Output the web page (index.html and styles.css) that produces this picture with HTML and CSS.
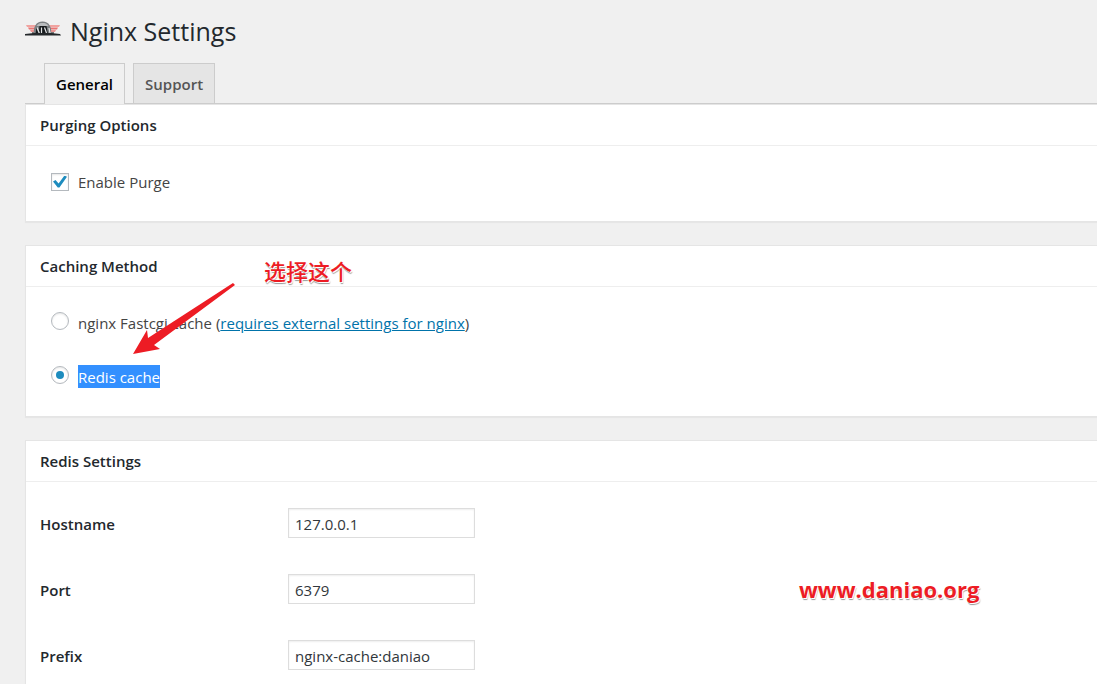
FILE: index.html
```html
<!DOCTYPE html>
<html lang="en">
<head>
<meta charset="utf-8">
<title>Nginx Settings</title>
<meta name="viewport" content="width=device-width, initial-scale=1">
<link rel="stylesheet" href="styles.css">
</head>
<body>
<main class="page">
  <header class="page-header">
    <svg class="logo" viewBox="0 0 36 16" aria-hidden="true">
      <path d="M1 4h13v2H2zM22 4h13l-1 2H22z" fill="#f0a3a0"/>
      <path d="M3 6.500h10v2H4zM23 6.500h10l-1 2h-9z" fill="#ea7573"/>
      <path d="M5 9h8v2H6zM23 9h8l-1 2h-7z" fill="#ec9492"/>
      <path d="M7 11h22v2H7z" fill="#777"/>
      <path d="M9 13C8 6 11 .500 17.500 .500S27 6 26 13z" fill="#7c8083"/>
      <path d="M11.500 5C13 2.500 15 2 17.500 2s4.500 .500 6 3z" fill="#b9bcbe"/>
      <path d="M10.500 13l1-7 2 7zM13.500 13l1-8h7l1.500 8z" fill="#171b1e"/>
      <path d="M12 6.500l2.500 6M16.500 6.500v5.500M19.500 6.500l2 5.500M24 7l1 5" fill="none" stroke="#e4e6e7" stroke-width="1.200"/>
      <path d="M0 13l9-1h17l9 1 1 1.500H0z" fill="#24282b"/>
    </svg>
    <h1 class="page-title">Nginx Settings</h1>
  </header>

  <nav class="tabs" aria-label="Settings sections">
    <a class="tab tab-active" href="#general" aria-current="page">General</a>
    <a class="tab" href="#support">Support</a>
  </nav>

  <form class="panels" id="general">
    <section class="panel">
      <h2 class="panel-title">Purging Options</h2>
      <div class="options">
        <label class="option"><input class="check" type="checkbox" checked><span>Enable Purge</span></label>
      </div>
    </section>

    <section class="panel">
      <h2 class="panel-title">Caching Method</h2>
      <div class="options">
        <div class="option">
          <input class="radio" type="radio" name="method" id="fastcgi">
          <span><label for="fastcgi">nginx Fastcgi cache</label> (<a class="link" href="#external">requires external settings for nginx</a>)</span>
        </div>
        <div class="option">
          <input class="radio" type="radio" name="method" id="redis" checked>
          <label class="selected" for="redis">Redis cache</label>
        </div>
      </div>
      <svg class="arrow" viewBox="0 0 104 73" aria-hidden="true">
        <path d="M1 71L15 47l1 8L101 0l2 2L22 62l6 4z" fill="#ed1c24"/>
      </svg>
      <span class="note" lang="zh">选择这个</span>
    </section>

    <section class="panel panel-last">
      <h2 class="panel-title">Redis Settings</h2>
      <div class="fields">
        <label class="field-label" for="hostname">Hostname</label>
        <input class="field" id="hostname" type="text" value="127.0.0.1">
        <label class="field-label" for="port">Port</label>
        <input class="field" id="port" type="text" value="6379">
        <label class="field-label" for="prefix">Prefix</label>
        <input class="field" id="prefix" type="text" value="nginx-cache:daniao">
      </div>
      <span class="watermark">www.daniao.org</span>
    </section>
  </form>
</main>
</body>
</html>
```
FILE: styles.css
```css
* {
  box-sizing: border-box;
}

body {
  margin: 0;
  background: #f0f0f0;
  color: #444;
  font: 15px/22px "Open Sans", "Noto Sans", "Noto Sans CJK SC", sans-serif;
}

.page {
  display: flex;
  flex-direction: column;
  min-height: 100vh;
  padding: 15px 0 0 25px;
}

.page-header {
  display: flex;
  align-items: center;
  gap: 9px;
  height: 32px;
}

.logo {
  width: 36px;
  height: 16px;
  margin-bottom: 4px;
}

.page-title {
  margin: 0;
  color: #23282d;
  font-size: 25px;
  font-weight: 400;
  line-height: 32px;
}

.tabs {
  display: flex;
  gap: 8px;
  margin-top: 16px;
  padding-left: 19px;
  border-bottom: 1px solid #ccc;
}

.tab {
  padding: 9px 11px 8px;
  border: 1px solid #ccc;
  border-bottom: 0;
  background: #e5e5e5;
  color: #555;
  font-size: 15px;
  font-weight: 600;
  text-decoration: none;
}

.tab-active {
  margin-bottom: -1px;
  padding-bottom: 9px;
  background: #f0f0f0;
  color: #000;
}

.panels {
  display: flex;
  flex: 1;
  flex-direction: column;
  gap: 23px;
}

.panel {
  position: relative;
  border: 1px solid #e5e5e5;
  border-right: 0;
  background: #fff;
  box-shadow: 0 1px 1px rgba(0, 0, 0, 0.04);
}

.panel-last {
  flex: 1;
  border-bottom: 0;
}

.panel-title {
  margin: 0;
  padding: 9px 14px;
  border-bottom: 1px solid #eee;
  color: #23282d;
  font-size: 15px;
  font-weight: 600;
  line-height: 22px;
}

.options {
  padding: 9px 25px 12px;
}

.option {
  display: flex;
  align-items: center;
  gap: 9px;
  min-height: 54px;
}

.check,
.radio {
  display: grid;
  place-content: center;
  width: 18px;
  height: 18px;
  margin: 0 0 1px;
  border: 1px solid #b4b9be;
  background: #fff;
  box-shadow: inset 0 1px 2px rgba(0, 0, 0, 0.1);
  appearance: none;
}

.radio {
  margin-bottom: 4px;
  border-radius: 50%;
}

.check:checked::before {
  width: 14px;
  height: 12px;
  background: #1e8cbe;
  clip-path: polygon(0 50%, 18% 38%, 40% 66%, 82% 0, 100% 10%, 46% 100%, 34% 100%);
  content: "";
}

.radio:checked::before {
  width: 8px;
  height: 8px;
  border-radius: 50%;
  background: #1e8cbe;
  content: "";
}

.link {
  color: #0073aa;
}

.selected {
  margin-top: -1px;
  padding-top: 1px;
  background: #3390ff;
  color: #fff;
}

.fields {
  display: grid;
  grid-template-columns: 248px 187px;
  gap: 36px 0;
  align-items: center;
  padding: 26px 14px 14px;
}

.field-label {
  padding-top: 2px;
  color: #23282d;
  font-weight: 600;
}

.field {
  width: 100%;
  height: 30px;
  padding: 2px 6px 0;
  border: 1px solid #ddd;
  background: #fff;
  box-shadow: inset 0 1px 2px rgba(0, 0, 0, 0.07);
  color: #32373c;
  font: inherit;
}

.arrow {
  position: absolute;
  top: 37px;
  left: 106px;
  width: 104px;
  height: 73px;
  pointer-events: none;
}

.note,
.watermark {
  position: absolute;
  color: #ed1c24;
  font-size: 22px;
  font-weight: 700;
  line-height: 32px;
  white-space: nowrap;
  text-shadow: 0 0 1px #fff, 1px 1px 0 #fff, 1px 2px 1px #999;
}

.note {
  top: 8px;
  left: 238px;
  font-family: "Noto Sans CJK SC", sans-serif;
  font-weight: 500;
}

.watermark {
  top: 132px;
  left: 773px;
}
```
